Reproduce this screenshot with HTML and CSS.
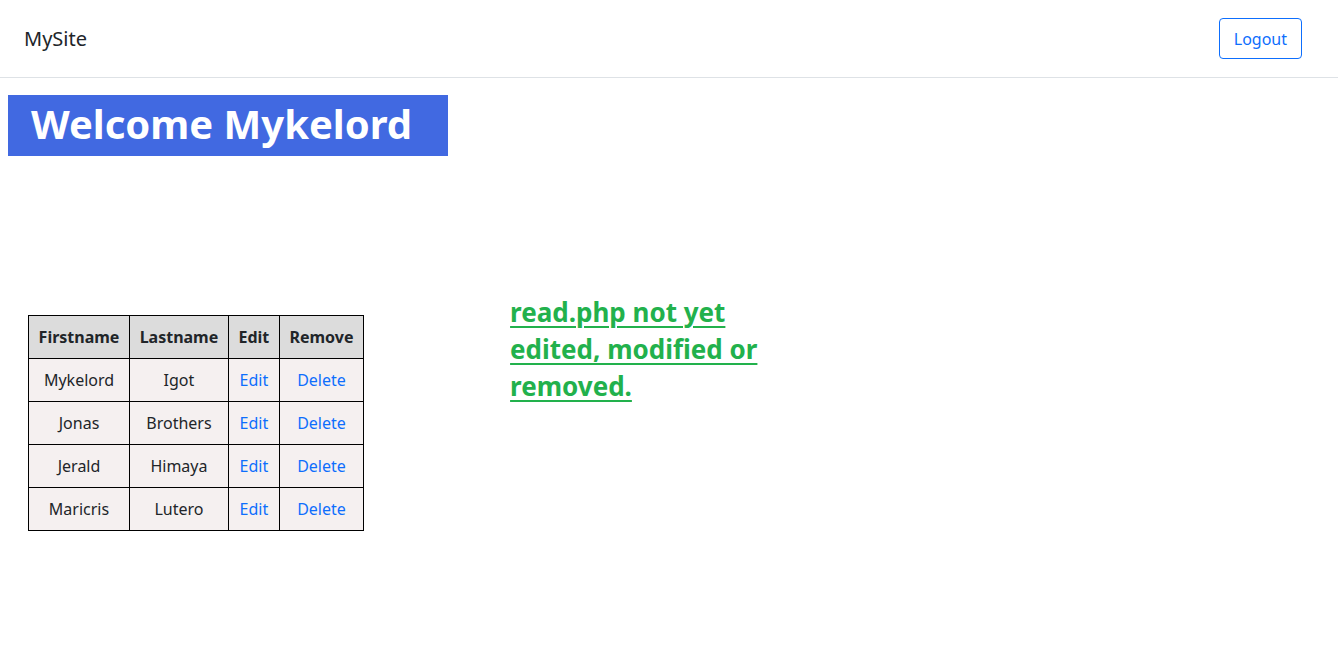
FILE: index.html
```html
<!DOCTYPE html>
<html>
<head>
<meta charset="utf-8">
<link rel="stylesheet" href="styles.css">
</head>
<body>
<nav class="navbar">
  <a class="brand" href="#">MySite</a>
  <button class="btn-logout">Logout</button>
</nav>
<h1 class="welcome">Welcome Mykelord</h1>
<main class="content">
  <table class="users">
    <thead>
      <tr><th>Firstname</th><th>Lastname</th><th>Edit</th><th>Remove</th></tr>
    </thead>
    <tbody>
      <tr><td>Mykelord</td><td>Igot</td><td><a href="#">Edit</a></td><td><a href="#">Delete</a></td></tr>
      <tr><td>Jonas</td><td>Brothers</td><td><a href="#">Edit</a></td><td><a href="#">Delete</a></td></tr>
      <tr><td>Jerald</td><td>Himaya</td><td><a href="#">Edit</a></td><td><a href="#">Delete</a></td></tr>
      <tr><td>Maricris</td><td>Lutero</td><td><a href="#">Edit</a></td><td><a href="#">Delete</a></td></tr>
    </tbody>
  </table>
  <p class="notice">read.php not yet edited, modified or removed.</p>
</main>
</body>
</html>
```
FILE: styles.css
```css
html, body {
  margin: 0;
  padding: 0;
  background: #fff;
  font-family: "Noto Sans", "Open Sans", sans-serif;
  color: #212529;
}
.navbar {
  height: 78px;
  box-sizing: border-box;
  border-bottom: 1px solid #dee2e6;
  display: flex;
  align-items: center;
  justify-content: space-between;
  padding: 0 36px 0 24px;
}
.brand {
  font-size: 20px;
  color: #212529;
  text-decoration: none;
}
.btn-logout {
  font-family: inherit;
  font-size: 16px;
  color: #0d6efd;
  background: #fff;
  border: 1px solid #0d6efd;
  border-radius: 4px;
  height: 41px;
  padding: 0 14px;
  margin-top: 0;
}
.welcome {
  display: inline-block;
  margin: 17px 0 0 8px;
  height: 61px;
  line-height: 58px;
  padding: 0 36px 0 23px;
  background: #4169e1;
  color: #fff;
  font-size: 40px;
  font-weight: 700;
  box-sizing: border-box;
}
.content {
  display: flex;
  align-items: flex-start;
  padding: 0 0 0 28px;
  margin-top: 159px;
}
.users {
  border-collapse: collapse;
  font-size: 16px;
  text-align: center;
}
.users th, .users td {
  border: 1px solid #000;
  height: 43px;
  padding: 0 9.6px;
  box-sizing: border-box;
}
.users th {
  background: #dcdcdc;
  font-weight: 700;
}
.users td {
  background: #f5f0f0;
}
.users a {
  color: #0d6efd;
  text-decoration: none;
}
.notice {
  margin: -21px 0 0 146px;
  width: 270px;
  font-size: 26px;
  line-height: 37px;
  font-weight: 700;
  color: #22b14c;
  text-decoration: underline;
  text-decoration-thickness: 2px;
  text-underline-offset: 4px;
}
```
